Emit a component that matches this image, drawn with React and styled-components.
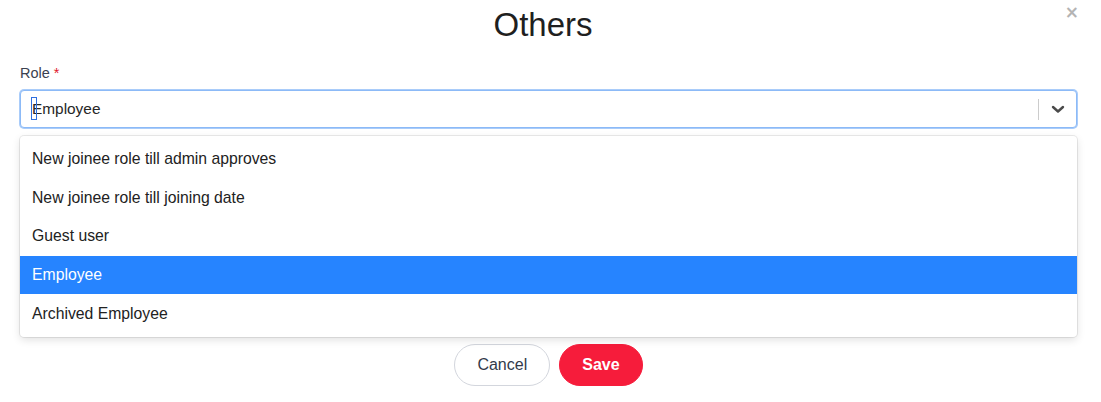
import styled, { createGlobalStyle } from "styled-components";

const GlobalStyle = createGlobalStyle`
  body {
    margin: 0;
    background: #fff;
    font-family: "Liberation Sans", Arial, sans-serif;
  }
`;

const Modal = styled.div`
  position: relative;
  width: 1101px;
  height: 402px;
  box-sizing: border-box;
  padding: 0 24px 0 20px;
  display: flex;
  flex-direction: column;
`;

const Header = styled.div`
  display: flex;
  align-items: flex-start;
  height: 64px;
`;

const Title = styled.h2`
  flex: 1;
  margin: 6px 0 0;
  padding-right: 11px;
  text-align: center;
  font-size: 33px;
  font-weight: 400;
  color: #1f1f1f;
  line-height: 38px;
`;

const Close = styled.button`
  position: absolute;
  top: 2px;
  right: 22px;
  border: none;
  background: none;
  padding: 0;
  color: #b4b4b4;
  font-size: 17px;
  font-weight: 700;
  cursor: pointer;
  font-family: "DejaVu Sans", sans-serif;
`;

const Label = styled.label`
  font-size: 14.5px;
  color: #3b4150;
  line-height: 18px;
  margin-bottom: 8px;
  display: block;
`;

const Required = styled.span`
  color: #e0182d;
  margin-left: 4px;
`;

const Field = styled.div`
  position: relative;
`;

const Control = styled.div`
  height: 38px;
  box-sizing: border-box;
  border: 1px solid #8cbaf7;
  box-shadow: 0 0 0 1px #a9ccfa;
  border-radius: 4px;
  display: flex;
  align-items: center;
  background: #fff;
`;

const Value = styled.div`
  flex: 1;
  position: relative;
  padding-left: 11px;
  font-size: 15.4px;
  color: #262626;
`;

const Caret = styled.span`
  position: absolute;
  left: 10px;
  top: -3px;
  width: 4px;
  height: 21px;
  border: 1px solid #2f6fe0;
`;

const Indicators = styled.div`
  display: flex;
  align-items: center;
  height: 100%;
`;

const Separator = styled.span`
  width: 1px;
  height: 21px;
  background: #cccccc;
`;

const Chevron = styled.div`
  width: 37px;
  display: flex;
  justify-content: center;
  color: #4a4a4a;
`;

const Menu = styled.div`
  position: absolute;
  top: 46px;
  left: 0;
  right: 0;
  background: #fff;
  border-radius: 4px;
  padding: 4px 0;
  box-shadow: 0 0 0 1px rgba(0, 0, 0, 0.08), 0 3px 8px rgba(0, 0, 0, 0.12);
  z-index: 2;
`;

const Option = styled.div`
  height: 38.6px;
  box-sizing: border-box;
  display: flex;
  align-items: center;
  padding: 0 12px;
  font-size: 15.75px;
  color: ${(p) => (p.$active ? "#fff" : "#222")};
  background: ${(p) => (p.$active ? "#2684ff" : "transparent")};
`;

const Body = styled.div`
  height: 216px;
`;

const Footer = styled.div`
  display: flex;
  justify-content: center;
  gap: 9px;
`;

const Button = styled.button`
  height: 42px;
  border-radius: 21px;
  font-family: "Liberation Sans", Arial, sans-serif;
  font-size: 16px;
  cursor: pointer;
  padding: 0 22px;
  border: 1px solid ${(p) => (p.$primary ? "#f61c3b" : "#d3d6dd")};
  background: ${(p) => (p.$primary ? "#f61c3b" : "#fff")};
  color: ${(p) => (p.$primary ? "#fff" : "#333a4a")};
  font-weight: ${(p) => (p.$primary ? 700 : 400)};
`;

const options = [
  "New joinee role till admin approves",
  "New joinee role till joining date",
  "Guest user",
  "Employee",
  "Archived Employee",
];

export default function App() {
  return (
    <>
      <GlobalStyle />
      <Modal>
        <Header>
          <Title>Others</Title>
          <Close>×</Close>
        </Header>
        <Label>
          Role<Required>*</Required>
        </Label>
        <Field>
          <Control>
            <Value>
              <Caret />
              Employee
            </Value>
            <Indicators>
              <Separator />
              <Chevron>
                <svg width="14" height="10" viewBox="0 0 14 10" fill="none" stroke="currentColor" strokeWidth="2.4" strokeLinecap="round" strokeLinejoin="round">
                  <path d="M2 3l5 4.5L12 3" />
                </svg>
              </Chevron>
            </Indicators>
          </Control>
          <Menu>
            {options.map((o) => (
              <Option key={o} $active={o === "Employee"}>
                {o}
              </Option>
            ))}
          </Menu>
        </Field>
        <Body />
        <Footer>
          <Button>Cancel</Button>
          <Button $primary>Save</Button>
        </Footer>
      </Modal>
    </>
  );
}
